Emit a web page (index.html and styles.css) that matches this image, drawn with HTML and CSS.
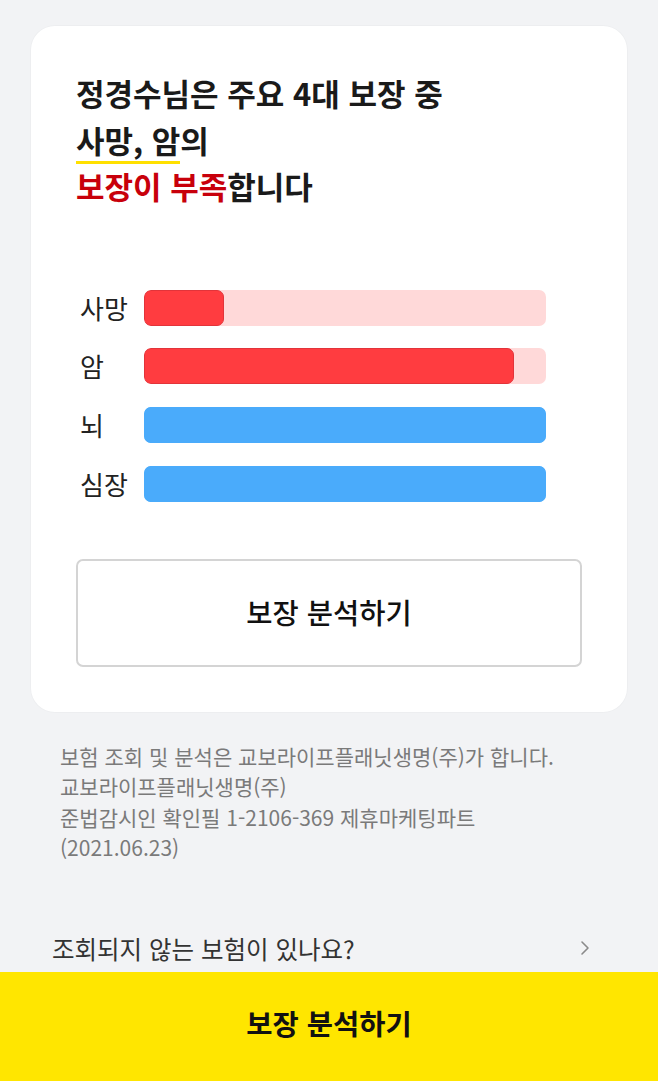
FILE: index.html
```html
<!DOCTYPE html>
<html lang="ko">
<head>
    <meta charset="UTF-8">
    <meta name="viewport" content="width=device-width, initial-scale=1.0">
    <title>보장 분석</title>
    <link rel="stylesheet" href="styles.css">
</head>
<body>

    <div class="page">
        <!-- 보장 요약 카드 -->
        <div class="card">
            <h1 class="summary">
                정경수님은 주요 4대 보장 중<br>
                <span class="mark">사망, 암</span>의<br>
                <span class="warn">보장이 부족</span>합니다
            </h1>

            <div class="chart">
                <div class="row">
                    <span class="label">사망</span>
                    <div class="track lack"><div class="fill" style="width: 20%"></div></div>
                </div>
                <div class="row">
                    <span class="label">암</span>
                    <div class="track lack"><div class="fill" style="width: 92%"></div></div>
                </div>
                <div class="row">
                    <span class="label">뇌</span>
                    <div class="track ok"><div class="fill" style="width: 100%"></div></div>
                </div>
                <div class="row">
                    <span class="label">심장</span>
                    <div class="track ok"><div class="fill" style="width: 100%"></div></div>
                </div>
            </div>

            <button class="btn-outline">보장 분석하기</button>
        </div>

        <p class="notice">
            보험 조회 및 분석은 교보라이프플래닛생명(주)가 합니다.<br>
            교보라이프플래닛생명(주)<br>
            준법감시인 확인필 1-2106-369 제휴마케팅파트<br>
            (2021.06.23)
        </p>

        <a class="link-row" href="#">
            <span>조회되지 않는 보험이 있나요?</span>
            <svg width="12" height="18" viewBox="0 0 12 18">
                <path d="M3 3 L9 9 L3 15" fill="none" stroke="#8a8a8a" stroke-width="1.6" stroke-linecap="round" stroke-linejoin="round"/>
            </svg>
        </a>
    </div>

    <button class="btn-cta">보장 분석하기</button>

</body>
</html>
```

FILE: styles.css
```css
html, body {
    margin: 0;
    height: 100%;
}
body {
    font-family: "Noto Sans CJK KR", "Noto Sans", sans-serif;
    background-color: #f2f3f5;
    color: #222;
    display: flex;
    flex-direction: column;
}
.page {
    flex: 1;
    padding: 26px 31px 0;
}
/* 흰색 요약 카드 */
.card {
    background-color: #fff;
    border-radius: 24px;
    padding: 44px 45px 45px;
    box-shadow: 0 0 0 1px rgba(0,0,0,0.02);
}
.summary {
    margin: 0;
    font-size: 31px;
    font-weight: 700;
    line-height: 46.5px;
    color: #1a1a1a;
}
.mark {
    background: linear-gradient(#ffe000, #ffe000) no-repeat 0 100% / 100% 3px;
    padding-bottom: 2px;
}
.warn {
    color: #c8000b;
}
.chart {
    margin: 80px 36px 0 4px;
    display: flex;
    flex-direction: column;
    gap: 22.7px;
}
.row {
    display: flex;
    align-items: center;
    height: 36px;
}
.label {
    width: 64px;
    font-size: 26px;
    line-height: 36px;
    color: #222;
}
.track {
    flex: 1;
    height: 36px;
    border-radius: 7px;
    overflow: hidden;
}
.track .fill {
    height: 100%;
    border-radius: 7px;
    box-sizing: border-box;
}
.lack {
    background-color: #ffd9d9;
}
.lack .fill {
    background-color: #ff3c40;
    border: 1px solid #e2343a;
}
.ok {
    background-color: #4aabfb;
}
.ok .fill {
    background-color: #4aabfb;
}
.btn-outline {
    display: block;
    width: 100%;
    height: 108px;
    margin-top: 57px;
    padding-bottom: 4px;
    background: #fff;
    border: 2px solid #d4d4d4;
    border-radius: 7px;
    font-family: inherit;
    font-size: 28.5px;
    font-weight: 500;
    color: #111;
    cursor: pointer;
}
.notice {
    margin: 29px 0 0 29px;
    font-size: 21px;
    line-height: 30.6px;
    color: #7a7a7a;
}
.link-row {
    display: flex;
    justify-content: space-between;
    align-items: center;
    margin: 68px 36px 0 21px;
    text-decoration: none;
    font-size: 24.5px;
    color: #333;
}
/* 하단 고정 노란 버튼 */
.btn-cta {
    height: 109px;
    padding-bottom: 10px;
    border: none;
    background-color: #ffe600;
    font-family: inherit;
    font-size: 28.5px;
    font-weight: 700;
    color: #111;
    cursor: pointer;
}
```
